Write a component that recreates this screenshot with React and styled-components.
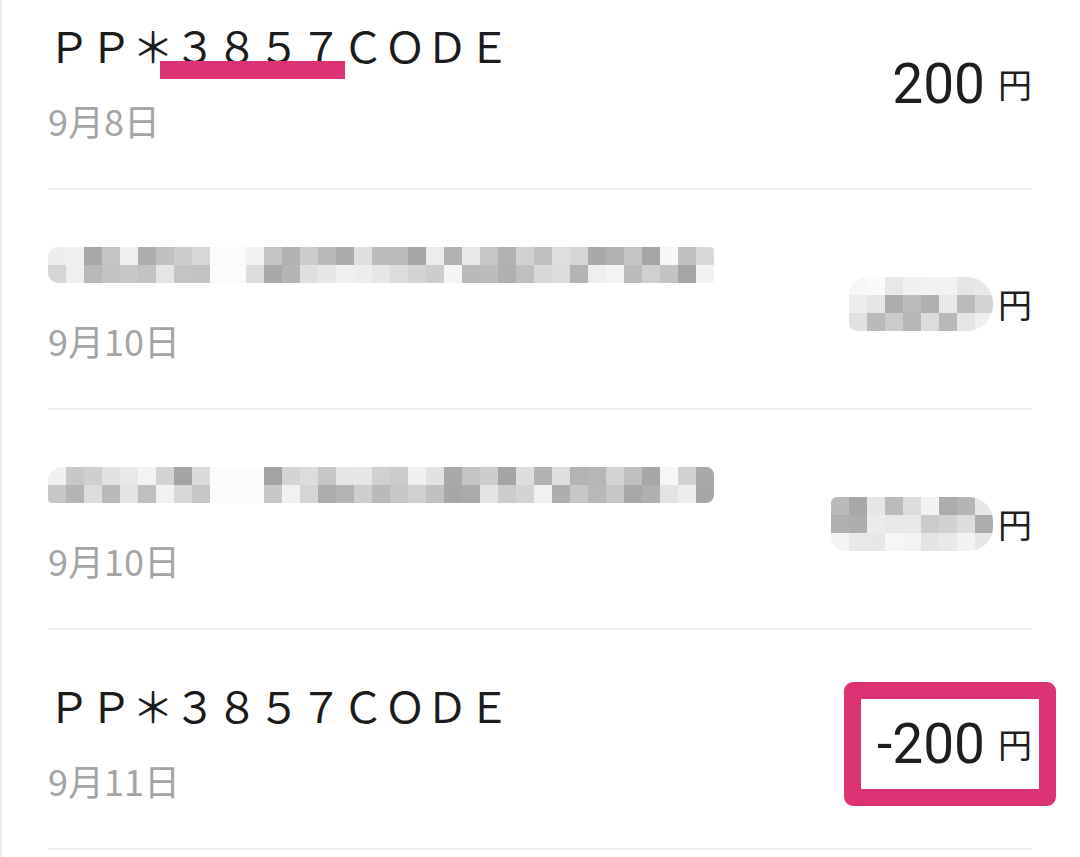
import styled, { createGlobalStyle } from "styled-components";

const GlobalStyle = createGlobalStyle`
  html, body {
    margin: 0;
    padding: 0;
    background: #ffffff;
  }
  body {
    font-family: "Noto Sans CJK JP", "Noto Sans", sans-serif;
    overflow: hidden;
  }
`;

const Page = styled.div`
  width: 1080px;
  height: 857px;
  box-sizing: border-box;
  border-left: 2px solid #ececec;
  overflow: hidden;
`;

const List = styled.div`
  display: flex;
  flex-direction: column;
  margin: -30px 48px 0 46px;
`;

const Row = styled.div`
  height: 220px;
  box-sizing: border-box;
  padding-top: 4px;
  border-bottom: 2px solid #efefef;
  display: flex;
  align-items: center;
  justify-content: space-between;
`;

const Info = styled.div`
  display: flex;
  flex-direction: column;
  gap: 33px;
`;

const Title = styled.div`
  height: 44px;
  display: flex;
  align-items: center;
  font-family: "Noto Sans CJK JP", sans-serif;
  font-size: 42px;
  line-height: 44px;
  color: #1b1b1b;
  white-space: nowrap;
`;

const Marked = styled.span`
  position: relative;
  &::after {
    content: "";
    position: absolute;
    left: -14px;
    right: -3px;
    bottom: -12px;
    height: 18px;
    background: #dc3375;
  }
`;

const DateText = styled.div`
  font-family: "Noto Sans CJK JP", sans-serif;
  font-size: 36px;
  line-height: 40px;
  color: #a4a4a4;
`;

const Amount = styled.div`
  position: relative;
  height: 60px;
  margin-top: 6px;
  display: flex;
  align-items: center;
  gap: ${(p) => (p.$masked ? "5px" : "13px")};
  color: #1e1e1e;
`;

const Number = styled.span`
  font-family: Roboto, "Noto Sans", sans-serif;
  font-size: 55px;
  line-height: 60px;
`;

const Yen = styled.span`
  font-family: "Noto Sans CJK JP", sans-serif;
  font-size: 34px;
  line-height: 40px;
`;

const Highlight = styled.div`
  position: absolute;
  right: -24px;
  top: -32px;
  width: 212px;
  height: 124px;
  box-sizing: border-box;
  border: 17px solid #dc3375;
  border-radius: 9px;
`;

const MosaicSvg = styled.svg`
  display: block;
  border-radius: ${(p) => p.$radius || "0"};
`;

function Mosaic({ cols, rows, seed, cell = 18, gaps = [], fadeRows = [], radius }) {
  const rects = [];
  let s = seed;
  for (let r = 0; r < rows; r++) {
    for (let c = 0; c < cols; c++) {
      s = (s * 9301 + 49297) % 233280;
      const v = s / 233280;
      let g = Math.round(162 + v * 85);
      if (fadeRows.includes(r)) g = Math.round(228 + v * 22);
      if (gaps.includes(c)) g = 251;
      rects.push(
        <rect
          key={`${r}-${c}`}
          x={c * cell}
          y={r * cell}
          width={cell}
          height={cell}
          fill={`rgb(${g},${g},${g})`}
        />
      );
    }
  }
  return (
    <MosaicSvg
      width={cols * cell}
      height={rows * cell}
      viewBox={`0 0 ${cols * cell} ${rows * cell}`}
      $radius={radius}
    >
      {rects}
    </MosaicSvg>
  );
}

function Entry({ title, date, amount }) {
  return (
    <Row>
      <Info>
        <Title>{title}</Title>
        <DateText>{date}</DateText>
      </Info>
      {amount}
    </Row>
  );
}

export default function App() {
  return (
    <Page>
      <GlobalStyle />
      <List>
        <Entry
          title={
            <>
              ＰＰ＊<Marked>３８５７</Marked>ＣＯＤＥ
            </>
          }
          date="9月8日"
          amount={
            <Amount>
              <Number>200</Number>
              <Yen>円</Yen>
            </Amount>
          }
        />
        <Entry
          title={
            <Mosaic cols={37} rows={2} seed={17} gaps={[9, 10]} radius="10px 4px 4px 10px" />
          }
          date="9月10日"
          amount={
            <Amount $masked>
              <Mosaic cols={8} rows={3} cell={18} seed={41} fadeRows={[0]} radius="18px 26px 26px 8px" />
              <Yen>円</Yen>
            </Amount>
          }
        />
        <Entry
          title={
            <Mosaic cols={37} rows={2} seed={93} gaps={[9, 10, 11]} radius="14px 8px 8px 4px" />
          }
          date="9月10日"
          amount={
            <Amount $masked>
              <Mosaic cols={9} rows={3} cell={18} seed={77} fadeRows={[2]} radius="6px 24px 24px 14px" />
              <Yen>円</Yen>
            </Amount>
          }
        />
        <Entry
          title="ＰＰ＊３８５７ＣＯＤＥ"
          date="9月11日"
          amount={
            <Amount>
              <Number>-200</Number>
              <Yen>円</Yen>
              <Highlight />
            </Amount>
          }
        />
      </List>
    </Page>
  );
}
